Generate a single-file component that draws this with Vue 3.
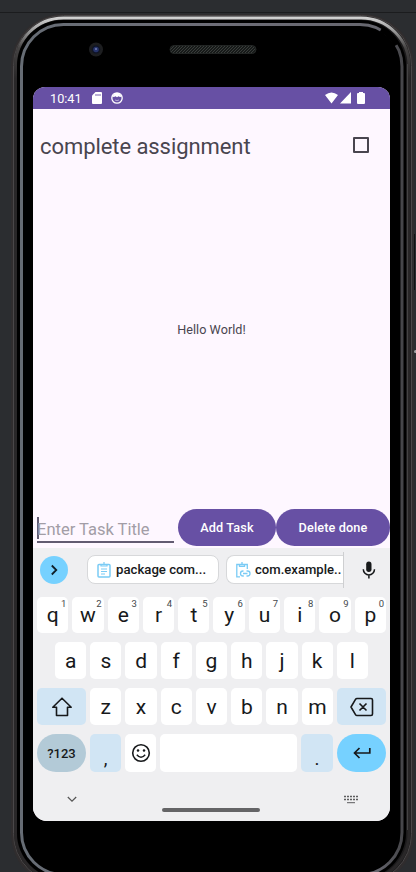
<script setup>
const row1 = 'qwertyuiop'.split('').map((c, i) => ({ c, n: (i + 1) % 10 }))
const row2 = 'asdfghjkl'.split('')
const row3 = 'zxcvbnm'.split('')
</script>

<template>
  <div class="stage">
    <svg class="shell" width="416" height="872" viewBox="0 0 416 872" fill="none">
      <defs>
        <linearGradient id="rim" x1="0" y1="0" x2="0" y2="872" gradientUnits="userSpaceOnUse">
          <stop offset="0.018" stop-color="#d8d8d8" />
          <stop offset="0.034" stop-color="#a0a0a0" />
          <stop offset="0.055" stop-color="#454343" />
          <stop offset="0.09" stop-color="#292728" />
          <stop offset="1" stop-color="#292728" />
        </linearGradient>
        <linearGradient id="edge" x1="19" y1="0" x2="403" y2="0" gradientUnits="userSpaceOnUse">
          <stop offset="0" stop-color="#666c74" />
          <stop offset="0.5" stop-color="#6e6e78" />
          <stop offset="0.93" stop-color="#66666e" />
          <stop offset="1" stop-color="#454549" />
        </linearGradient>
        <pattern id="mesh" width="3" height="3" patternUnits="userSpaceOnUse">
          <rect width="3" height="3" fill="#171a19" />
          <path d="M0 0h1v1H0zM2 1h1v1H2zM1 2h1v1H1z" fill="#393d3b" />
        </pattern>
      </defs>
      <path d="M0 12.5H416" stroke="#1b1c1e" />
      <rect x="11" y="14" width="403" height="872" rx="52" fill="#302d2e" />
      <rect x="13.5" y="15.5" width="398" height="868" rx="50" fill="#1c1b1c" stroke="#4a4748" />
      <rect x="15.5" y="18" width="393.5" height="863" rx="48" stroke="url(#rim)" stroke-width="3" />
      <rect x="17" y="20" width="389" height="859" rx="46" fill="#000" />
      <path d="M407.5 64V830" stroke="#444344" />
      <rect x="21.5" y="24.5" width="380.5" height="850" rx="42" stroke="url(#edge)" stroke-width="3" />
      <path d="M381 29.600A42 42 0 0 1 396.400 45" stroke="#000" stroke-width="5" />
      <circle cx="96" cy="49.5" r="7" fill="#1d1e20" />
      <circle cx="96" cy="49.5" r="4.3" fill="#101526" />
      <circle cx="96" cy="49.5" r="2.8" fill="#26336b" />
      <circle cx="96" cy="49" r="1" fill="#7481b0" />
      <rect x="170" y="45.500" width="86" height="8" rx="4" fill="url(#mesh)" stroke="#222524" />
      <path d="M414.500 234V290" stroke="#121213" />
      <circle cx="415.500" cy="351.500" r="1.500" fill="#a0a0a2" />
    </svg>

    <div class="screen">
      <header class="status">
        <span class="clock">10:41</span>
        <svg class="sd" width="10" height="12" viewBox="0 0 10 12"><path d="M3.500 0H9a1 1 0 0 1 1 1v10a1 1 0 0 1-1 1H1a1 1 0 0 1-1-1V3.500z" fill="#fff" /><path d="M4 2v2M6 2v2M8 2v2" stroke="#6750a4" stroke-width=".9" /></svg>
        <svg class="debug" width="12" height="12" viewBox="0 0 12 12" fill="none"><circle cx="6" cy="6" r="5.200" stroke="#fff" stroke-width="1.300" /><path d="M1 4.500 3 2.500 4 1h4l1 1.500 2 2-2 .5-1.500-.7L6 5.300 4.500 4.300 3 5z" fill="#fff" /><path d="M4 8q2 1.200 4 0" stroke="#fff" stroke-width=".5" /></svg>
        <svg class="signals" width="41" height="13" viewBox="0 0 41 13" fill="#fff"><path d="M0 3Q6.500-2 13 3L6.500 11.500zM15 11.500 26 0V11.500zM34 0h4v1h1q1 0 1 1v9q0 1-1 1h-6q-1 0-1-1V2q0-1 1-1h1z" /></svg>
      </header>

      <main class="content">
        <div class="task">
          <span>complete assignment</span>
          <i class="check"></i>
        </div>
        <p class="hello">Hello World!</p>
        <div class="entry">
          <div class="field"><span>Enter Task Title</span></div>
          <button class="add">Add Task</button>
          <button class="del">Delete done</button>
        </div>
      </main>

      <section class="keyboard">
        <div class="suggest">
          <span class="more"><svg width="28" height="28" viewBox="0 0 28 28" fill="none"><path d="m11.800 9.500 4.500 4.500-4.500 4.500" stroke="#10202a" stroke-width="1.800" /></svg></span>
          <span class="chip">
            <svg width="14" height="16" viewBox="0 0 14 16" fill="none" stroke="#7acbf5" stroke-width="1.500"><rect x="1" y="2.500" width="12" height="12.500" rx="1" /><path d="M4 2.500h6V4H4zM7 0v2.500M4 7h6M4 9.500h6M4 12h4" stroke-width="1.200" /></svg>
            package com...
          </span>
          <span class="chip cut">
            <svg width="16" height="16" viewBox="0 0 16 16" fill="none" stroke="#7acbf5" stroke-width="1.500"><path d="M5 14.800H1.800V2.500h10.500V7M4.500 2.500V4.300h5V2.500M7 0v2.500M8.500 9H8a2.500 2.500 0 0 0 0 5h.8M11.500 9h1a2.500 2.500 0 0 1 0 5h-1M8 11.500h4.500" stroke-width="1.300" /></svg>
            com.example..
          </span>
          <span class="mic"><svg width="14" height="18" viewBox="0 0 14 18" fill="none"><rect x="4.200" y="0.500" width="5.300" height="10.500" rx="2.650" fill="#17191b" /><path d="M1.300 8.300a5.600 5.600 0 0 0 11.200 0M6.900 14v3.500" stroke="#17191b" stroke-width="1.500" /></svg></span>
        </div>

        <div class="row r1"><span v-for="k in row1" :key="k.c" class="key"><b>{{ k.c }}</b><sup>{{ k.n }}</sup></span></div>
        <div class="row r2"><span v-for="k in row2" :key="k" class="key"><b>{{ k }}</b></span></div>
        <div class="row r3">
          <span class="key tint"><svg width="22" height="20" viewBox="0 0 22 20" fill="none"><path d="M11 1.200 1.800 10.300H5.500V18.500h11V10.300h3.700z" stroke="#17191b" stroke-width="1.600" stroke-linejoin="round" /></svg></span>
          <span v-for="k in row3" :key="k" class="key"><b>{{ k }}</b></span>
          <span class="key tint"><svg width="24" height="20" viewBox="0 0 24 20" fill="none" stroke="#17191b" stroke-width="1.600" stroke-linejoin="round"><path d="M7 1.500H21q1.500 0 1.500 1.500V17q0 1.500-1.500 1.500H7q-1 0-1.500-.8L1 10 5.500 2.300Q6 1.500 7 1.500zM9.500 6.500l7 7M16.500 6.500l-7 7" /></svg></span>
        </div>
        <div class="row r4">
          <span class="key sym">?123</span>
          <span class="key tint low">,</span>
          <span class="key"><svg width="20" height="20" viewBox="0 0 20 20" fill="none" stroke="#17191b"><circle cx="10" cy="10" r="8.300" stroke-width="1.600" /><path d="M5.800 11.700q4.200 5 8.400 0" stroke-width="1.400" /><circle cx="7" cy="7.600" r="1.250" fill="#17191b" stroke="none" /><circle cx="13" cy="7.600" r="1.250" fill="#17191b" stroke="none" /></svg></span>
          <span class="key"></span>
          <span class="key tint low">.</span>
          <span class="key enter"><svg width="18" height="12" viewBox="0 0 18 12" fill="none"><path d="M16.800 1V6H1.800M6.500 1 1.500 6l5 5" stroke="#17191b" stroke-width="1.700" /></svg></span>
        </div>

        <footer class="nav">
          <svg width="10" height="7" viewBox="0 0 10 7" fill="none"><path d="M.8 1 5 5.200 9.200 1" stroke="#555" stroke-width="1.200" /></svg>
          <i class="pill"></i>
          <svg width="14" height="9" viewBox="0 0 14 9" fill="none" stroke="#5c5c5e"><path d="M0 1.500h14M0 4.500h14" stroke-width="1.700" stroke-dasharray="2 1" /><path d="M3 7.700h8" stroke-width="1" /></svg>
        </footer>
      </section>
    </div>
  </div>
</template>

<style>
body { margin: 0; background: #2b2d30; }
</style>

<style scoped>
.stage { position: relative; width: 416px; height: 872px; box-sizing: border-box; padding: 87px 26px 51px 33px; overflow: hidden; font-family: Roboto, sans-serif; background: #2b2d30; }
.shell { position: absolute; inset: 0; }
svg { display: block; flex: none; }
.screen { position: relative; width: 357px; height: 734px; border-radius: 12px 12px 14px 14px; overflow: hidden; background: #fef7ff; display: flex; flex-direction: column; }
.status { height: 22px; flex: none; background: #6750a4; display: flex; align-items: center; padding: 0 24px 0 17px; color: #fff; font-size: 12.7px; }
.clock { width: 32px; white-space: nowrap; }
.sd { margin-left: 10px; }
.debug { margin-left: 9px; }
.signals { margin-left: auto; }
.content { height: 439px; flex: none; display: flex; flex-direction: column; color: #49454f; }
.task { display: flex; justify-content: space-between; align-items: center; height: 74px; padding: 0 21px 0 7px; font-size: 22px; letter-spacing: -.07px; }
.check { width: 12px; height: 12px; border: 2px solid #49454f; border-radius: 1px; margin-top: -2px; }
.hello { margin: 139px 0 0; text-align: center; font-size: 12.6px; line-height: 16px; letter-spacing: .06px; }
.entry { margin-top: auto; height: 39px; display: flex; align-items: flex-start; padding-left: 4px; }
.field { width: 137px; height: 32px; border-bottom: 2px solid #625b71; display: flex; align-items: center; margin-right: 4px; font-size: 16.5px; color: #a29da6; white-space: nowrap; }
.field::before { content: ''; width: 2px; height: 22px; background: #625b71; margin-right: -2px; margin-top: 6px; }
.field span { padding-top: 8px; }
button { height: 37px; padding: 0; border: 0; border-radius: 19px; background: #6750a4; color: #fff; font: 500 12.7px Roboto, sans-serif; letter-spacing: .12px; }
.add { width: 98px; }
.del { width: 114px; }
.keyboard { height: 273px; background: #efeff1; box-sizing: border-box; padding: 0 4px; color: #17191b; }
.suggest { height: 49px; display: flex; align-items: center; box-sizing: border-box; padding: 0 0 6px 3px; }
.more { width: 28px; height: 28px; border-radius: 50%; background: #76d1ff; }
.chip { width: 132px; height: 29px; box-sizing: border-box; border: 1px solid #d7d8da; border-radius: 8px; background: #fff; margin-left: 19px; padding-left: 9px; display: flex; align-items: center; gap: 5px; font-size: 13.2px; font-weight: 500; white-space: nowrap; overflow: hidden; }
.chip.cut { width: 117px; margin-left: 7px; border-right: 0; border-radius: 8px 0 0 8px; padding-left: 8px; gap: 4px; font-size: 13.1px; }
.mic { width: 43px; height: 36px; border-left: 1px solid #cecfd1; display: flex; align-items: center; padding-left: 18px; box-sizing: border-box; }
.row { display: grid; gap: 4px; grid-template-columns: repeat(10, 1fr); height: 37px; margin-bottom: 9px; }
.r1 { height: 36px; }
.r2 { grid-template-columns: repeat(9, 1fr); padding: 0 18px; }
.r3 { grid-template-columns: 49px repeat(7, 1fr) 49px; }
.r4 { grid-template-columns: 49px 31px 31px 1fr 32px 49px; height: 38px; }
.key { position: relative; background: #fff; border-radius: 5px; display: flex; align-items: center; justify-content: center; }
.key b { font-weight: 400; font-size: 21px; line-height: 24px; }
.key sup { position: absolute; right: 2px; top: 2px; font-size: 9.5px; line-height: 10px; color: #46494c; }
.tint { background: #d1e5f4; }
.low { font-size: 19px; padding-top: 10px; }
.key.low { box-sizing: border-box; }
.sym { background: #b3cad7; border-radius: 19px; font-size: 13px; font-weight: 500; }
.enter { background: #76d1ff; border-radius: 19px; }
.nav { display: flex; align-items: center; justify-content: space-between; padding: 9px 28px 0 30px; height: 18px; }
.pill { width: 98px; height: 4px; border-radius: 2px; background: #646466; margin: 21px 0 0 1px; }
</style>
